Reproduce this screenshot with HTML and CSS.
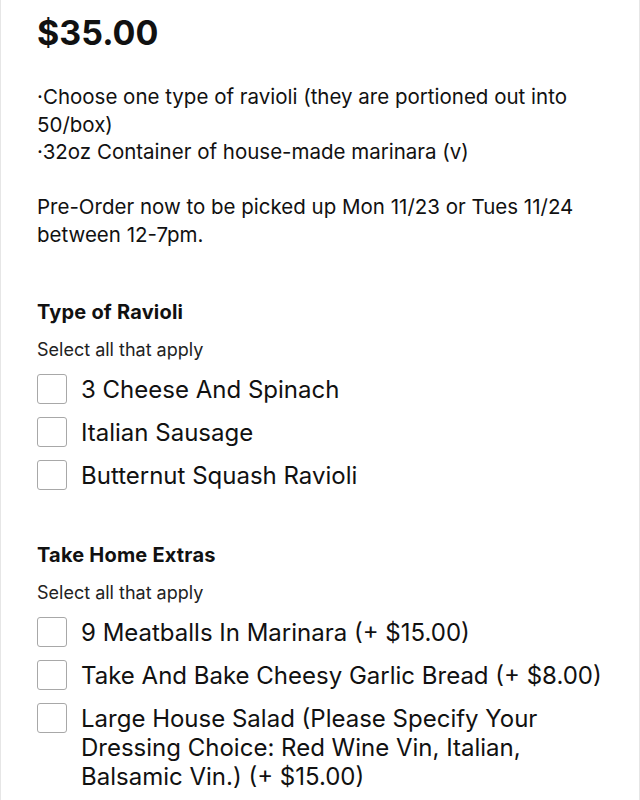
FILE: index.html
```html
<!DOCTYPE html>
<html>
<head>
<meta charset="utf-8">
<link rel="stylesheet" href="styles.css">
</head>
<body>
<div class="page">
  <h1 class="price">$35.00</h1>
  <div class="desc">
    <p>·Choose one type of ravioli (they are portioned out into 50/box)<br>·32oz Container of house-made marinara (v)</p>
    <p>Pre-Order now to be picked up Mon 11/23 or Tues 11/24 between 12-7pm.</p>
  </div>
  <section class="group">
    <h2 class="group-title">Type of Ravioli</h2>
    <p class="hint">Select all that apply</p>
    <ul class="options">
      <li class="option"><span class="box"></span><span class="label">3 Cheese And Spinach</span></li>
      <li class="option"><span class="box"></span><span class="label">Italian Sausage</span></li>
      <li class="option"><span class="box"></span><span class="label">Butternut Squash Ravioli</span></li>
    </ul>
  </section>
  <section class="group">
    <h2 class="group-title">Take Home Extras</h2>
    <p class="hint">Select all that apply</p>
    <ul class="options">
      <li class="option"><span class="box"></span><span class="label">9 Meatballs In Marinara (+ $15.00)</span></li>
      <li class="option"><span class="box"></span><span class="label">Take And Bake Cheesy Garlic Bread (+ $8.00)</span></li>
      <li class="option"><span class="box"></span><span class="label">Large House Salad (Please Specify Your Dressing Choice: Red Wine Vin, Italian, Balsamic Vin.) (+ $15.00)</span></li>
    </ul>
  </section>
</div>
</body>
</html>
```

FILE: styles.css
```css
html, body {
  margin: 0;
  padding: 0;
  background: #ffffff;
}
body {
  font-family: Inter, Roboto, "Liberation Sans", sans-serif;
  color: #111111;
}
.page {
  box-sizing: border-box;
  width: 640px;
  min-height: 800px;
  border-left: 1px solid #e6e6e6;
  border-right: 1px solid #e6e6e6;
  padding: 11px 30px 0 36px;
}
.price {
  margin: 0;
  font-size: 34px;
  font-weight: 700;
  line-height: 44px;
}
.desc {
  margin-top: 28px;
  font-size: 20.5px;
  line-height: 27.5px;
}
.desc p {
  margin: 0 0 27.5px 0;
}
.desc p:last-child {
  margin-bottom: 0;
}
.group {
  margin-top: 51px;
}
.group + .group {
  margin-top: 52px;
}
.group-title {
  margin: 0;
  font-size: 20px;
  font-weight: 700;
  line-height: 26px;
  letter-spacing: 0.2px;
}
.hint {
  margin: 13px 0 0 0;
  font-size: 18px;
  line-height: 24px;
  color: #222;
}
.options {
  list-style: none;
  margin: 12px 0 0 0;
  padding: 0;
  display: flex;
  flex-direction: column;
  gap: 13px;
}
.option {
  display: flex;
  align-items: flex-start;
  gap: 14px;
}
.box {
  flex: none;
  box-sizing: border-box;
  width: 30px;
  height: 30px;
  border: 1.5px solid #a8a8a8;
  border-radius: 3px;
  background: #fff;
}
.label {
  font-size: 24px;
  line-height: 29px;
  padding-top: 0.5px;
}
```
